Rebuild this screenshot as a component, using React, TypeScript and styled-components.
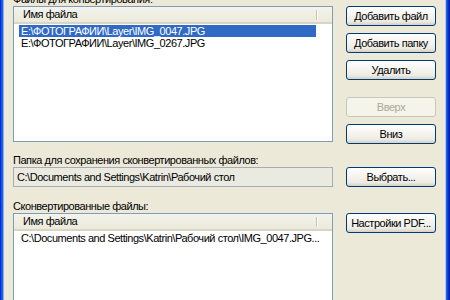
import React from "react";
import styled, { createGlobalStyle } from "styled-components";

const GlobalStyle = createGlobalStyle`
  html, body {
    margin: 0;
    padding: 0;
    width: 450px;
    height: 300px;
    overflow: hidden;
    background: #ece9d8;
  }
  body {
    font-family: "Liberation Sans", "DejaVu Sans", sans-serif;
    font-size: 11px;
    letter-spacing: -0.45px;
    color: #000;
  }
`;

const Window = styled.div`
  display: flex;
  width: 450px;
  height: 300px;
  overflow: hidden;
`;

const FrameLeft = styled.div`
  width: 4px;
  flex: none;
  background: linear-gradient(to right, #0026c8 0 1px, #0a5cf0 1px 2px, #1763ea 2px 3px, #8fa9e4 3px 4px);
`;

const FrameRight = styled.div`
  width: 5px;
  flex: none;
  background: linear-gradient(to right, #b8c8ec 0 1px, #1c5ee6 1px 2px, #0a48d8 2px 3px, #0030d0 3px 4px, #001ea8 4px 5px);
`;

const Client = styled.div`
  flex: 1;
  display: flex;
  flex-direction: column;
  padding: 0 9px;
  background: #ece9d8;
  overflow: hidden;
`;

const Section = styled.div<{ $mt?: number }>`
  display: grid;
  grid-template-columns: 320px 90px;
  column-gap: 13px;
  align-items: start;
  margin-top: ${(p) => p.$mt ?? 0}px;
`;

const Label = styled.div<{ $mt?: number }>`
  height: 13px;
  line-height: 13px;
  white-space: nowrap;
  margin-top: ${(p) => p.$mt ?? 0}px;
  grid-column: 1;
`;

const ListView = styled.div<{ $h: number }>`
  grid-column: 1;
  height: ${(p) => p.$h}px;
  box-sizing: border-box;
  border: 1px solid #7f9db9;
  background: #fff;
  overflow: hidden;
`;

const Header = styled.div`
  display: flex;
  height: 17px;
  box-sizing: border-box;
  background: linear-gradient(#f4f3ec, #ebeadb);
  border-bottom: 2px solid #d8d4c6;
`;

const HeaderCell = styled.div<{ $w: number }>`
  width: ${(p) => p.$w}px;
  box-sizing: border-box;
  padding-left: 9px;
  line-height: 15px;
  position: relative;
  &::after {
    content: "";
    position: absolute;
    right: 0;
    top: 3px;
    bottom: 2px;
    width: 1px;
    background: #c7c5b2;
    box-shadow: 1px 0 0 #fff;
  }
`;

const Rows = styled.div`
  padding-top: 1px;
`;

const Row = styled.div<{ $selected?: boolean }>`
  width: 297px;
  margin-left: 5px;
  height: 12px;
  line-height: 12px;
  padding-left: 2px;
  box-sizing: border-box;
  white-space: nowrap;
  overflow: visible;
  background: ${(p) => (p.$selected ? "#316ac5" : "transparent")};
  color: ${(p) => (p.$selected ? "#fff" : "#000")};
`;

const ButtonStack = styled.div`
  grid-column: 2;
  display: flex;
  flex-direction: column;
  gap: 7px;
`;

const Button = styled.button<{ $mt?: number }>`
  width: 90px;
  height: 20px;
  box-sizing: border-box;
  padding: 0;
  margin: 0;
  margin-top: ${(p) => p.$mt ?? 0}px;
  border: 1px solid #003c74;
  border-radius: 3px;
  font-family: "Liberation Sans", "DejaVu Sans", sans-serif;
  font-size: 11px;
  letter-spacing: -0.45px;
  color: #000;
  background: linear-gradient(#ffffff 0%, #f6f5f0 40%, #ecebe4 80%, #d6d0c5 100%);
  white-space: nowrap;
  &:disabled {
    border-color: #c9c7ba;
    background: #f5f4ea;
    color: #aca899;
  }
`;

const SideButton = styled(Button)<{ $row: number }>`
  grid-column: 2;
  grid-row: ${(p) => p.$row};
  align-self: end;
`;

const TopSideButton = styled(Button)<{ $row: number }>`
  grid-column: 2;
  grid-row: ${(p) => p.$row};
  align-self: start;
`;

const TextBox = styled.div`
  grid-column: 1;
  height: 20px;
  box-sizing: border-box;
  border: 1px solid #a5acb5;
  background: #ebeae0;
  padding-left: 3px;
  line-height: 18px;
  white-space: nowrap;
  overflow: hidden;
`;

export default function App() {
  return (
    <>
      <GlobalStyle />
      <Window>
        <FrameLeft />
        <Client>
          <Label $mt={-7}>Файлы для конвертирования:</Label>
          <Section>
            <ListView $h={136}>
              <Header>
                <HeaderCell $w={303}>Имя файла</HeaderCell>
              </Header>
              <Rows>
                <Row $selected>E:\ФОТОГРАФИИ\Layer\IMG_0047.JPG</Row>
                <Row>E:\ФОТОГРАФИИ\Layer\IMG_0267.JPG</Row>
              </Rows>
            </ListView>
            <ButtonStack>
              <Button>Добавить файл</Button>
              <Button>Добавить папку</Button>
              <Button>Удалить</Button>
              <Button $mt={10} disabled>
                Вверх
              </Button>
              <Button>Вниз</Button>
            </ButtonStack>
          </Section>
          <Section $mt={10}>
            <Label>Папка для сохранения сконвертированных файлов:</Label>
            <TextBox>C:\Documents and Settings\Katrin\Рабочий стол</TextBox>
            <SideButton $row={2}>Выбрать...</SideButton>
          </Section>
          <Section $mt={13}>
            <Label>Сконвертированные файлы:</Label>
            <ListView $h={100}>
              <Header>
                <HeaderCell $w={303}>Имя файла</HeaderCell>
              </Header>
              <Rows>
                <Row>C:\Documents and Settings\Katrin\Рабочий стол\IMG_0047.JPG...</Row>
              </Rows>
            </ListView>
            <TopSideButton $row={2}>Настройки PDF...</TopSideButton>
          </Section>
        </Client>
        <FrameRight />
      </Window>
    </>
  );
}
